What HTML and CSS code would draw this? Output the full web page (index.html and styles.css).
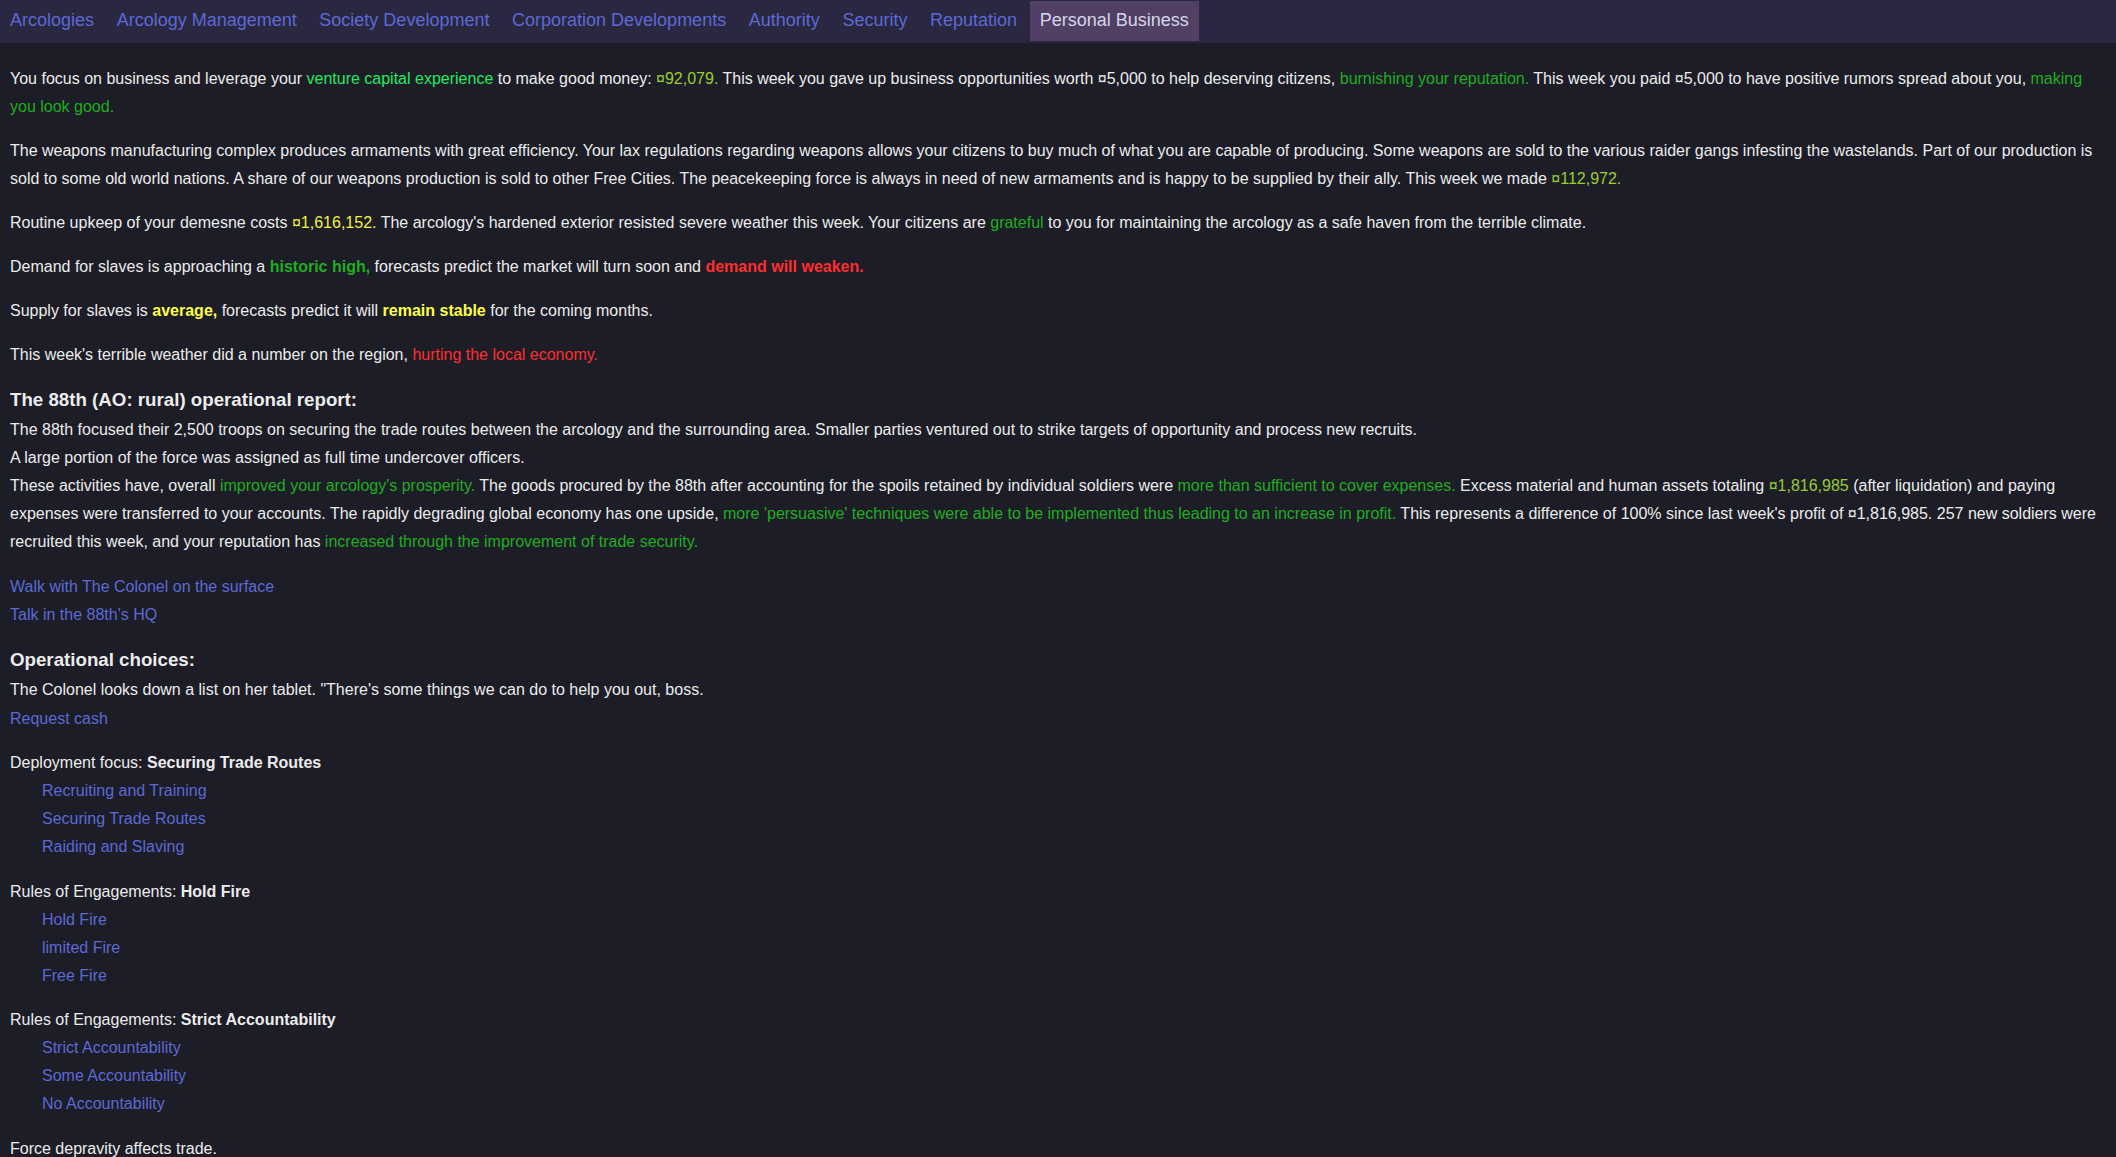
FILE: index.html
```html
<!DOCTYPE html>
<html lang="en">
<head>
<meta charset="utf-8">
<title>Personal Business</title>
<link rel="stylesheet" href="styles.css">
</head>
<body>
<nav class="tab-bar">
  <span class="tab">Arcologies</span>
  <span class="tab">Arcology Management</span>
  <span class="tab">Society Development</span>
  <span class="tab">Corporation Developments</span>
  <span class="tab">Authority</span>
  <span class="tab">Security</span>
  <span class="tab">Reputation</span>
  <span class="tab active">Personal Business</span>
</nav>
<main class="content">
  <p>You focus on business and leverage your <span class="lime">venture capital experience</span> to make good money: <span class="cash">¤92,079.</span> This week you gave up business opportunities worth ¤5,000 to help deserving citizens, <span class="green">burnishing your reputation.</span> This week you paid ¤5,000 to have positive rumors spread about you, <span class="green">making you look good.</span></p>
  <p>The weapons manufacturing complex produces armaments with great efficiency. Your lax regulations regarding weapons allows your citizens to buy much of what you are capable of producing. Some weapons are sold to the various raider gangs infesting the wastelands. Part of our production is sold to some old world nations. A share of our weapons production is sold to other Free Cities. The peacekeeping force is always in need of new armaments and is happy to be supplied by their ally. This week we made <span class="cash">¤112,972.</span></p>
  <p>Routine upkeep of your demesne costs <span class="yellow">¤1,616,152.</span> The arcology's hardened exterior resisted severe weather this week. Your citizens are <span class="green">grateful</span> to you for maintaining the arcology as a safe haven from the terrible climate.</p>
  <p>Demand for slaves is approaching a <b class="green">historic high,</b> forecasts predict the market will turn soon and <b class="red">demand will weaken.</b></p>
  <p>Supply for slaves is <b class="yellow">average,</b> forecasts predict it will <b class="yellow">remain stable</b> for the coming months.</p>
  <p>This week's terrible weather did a number on the region, <span class="red">hurting the local economy.</span></p>

  <h3 class="section-title">The 88th (AO: rural) operational report:</h3>
  <div class="report">
    <div>The 88th focused their 2,500 troops on securing the trade routes between the arcology and the surrounding area. Smaller parties ventured out to strike targets of opportunity and process new recruits.</div>
    <div>A large portion of the force was assigned as full time undercover officers.</div>
    <div>These activities have, overall <span class="green">improved your arcology's prosperity.</span> The goods procured by the 88th after accounting for the spoils retained by individual soldiers were <span class="green">more than sufficient to cover expenses.</span> Excess material and human assets totaling <span class="cash">¤1,816,985</span> (after liquidation) and paying expenses were transferred to your accounts. The rapidly degrading global economy has one upside, <span class="green">more 'persuasive' techniques were able to be implemented thus leading to an increase in profit.</span> This represents a difference of 100% since last week's profit of ¤1,816,985. 257 new soldiers were recruited this week, and your reputation has <span class="green">increased through the improvement of trade security.</span></div>
  </div>

  <div class="links">
    <a class="link">Walk with The Colonel on the surface</a>
    <a class="link">Talk in the 88th's HQ</a>
  </div>

  <h3 class="section-title">Operational choices:</h3>
  <div>The Colonel looks down a list on her tablet. "There's some things we can do to help you out, boss.</div>
  <div class="request"><a class="link">Request cash</a></div>

  <div class="choice">
    <div>Deployment focus: <b>Securing Trade Routes</b></div>
    <div class="options">
      <a class="link">Recruiting and Training</a>
      <a class="link">Securing Trade Routes</a>
      <a class="link">Raiding and Slaving</a>
    </div>
  </div>

  <div class="choice">
    <div>Rules of Engagements: <b>Hold Fire</b></div>
    <div class="options">
      <a class="link">Hold Fire</a>
      <a class="link">limited Fire</a>
      <a class="link">Free Fire</a>
    </div>
  </div>

  <div class="choice">
    <div>Rules of Engagements: <b>Strict Accountability</b></div>
    <div class="options">
      <a class="link">Strict Accountability</a>
      <a class="link">Some Accountability</a>
      <a class="link">No Accountability</a>
    </div>
  </div>

  <div class="choice">
    <div>Force depravity affects trade.</div>
  </div>
</main>
</body>
</html>
```
FILE: styles.css
```css
html {
  overflow: hidden;
  background: #1c1d26;
}

body {
  margin: 0;
  background: #1c1d26;
  color: #ececec;
  font-family: "Liberation Sans", Arial, sans-serif;
  font-size: 16px;
  line-height: 28px;
}

.tab-bar {
  display: flex;
  gap: 2.6px;
  background: #2a2740;
  padding: 1px 0 2px 0;
}

.tab {
  display: block;
  height: 40px;
  line-height: 38px;
  padding: 0 10px;
  font-size: 18px;
  color: #5c69d6;
  white-space: nowrap;
}

.tab.active {
  background: #514063;
  color: #d6d6ea;
}

.content {
  padding: 6px 10px 0 10px;
}

.content p {
  margin: 16px 0;
}

.section-title {
  font-size: 18.72px;
  font-weight: bold;
  line-height: 28px;
  margin: 17px 0 2px 0;
}

.report {
  margin-bottom: 17px;
}

.links {
  display: flex;
  flex-direction: column;
}

.link {
  color: #5c69d6;
  cursor: pointer;
}

.request {
  margin-top: 0.5px;
}

.choice {
  margin-top: 16.5px;
}

.options {
  display: flex;
  flex-direction: column;
  align-items: flex-start;
  padding-left: 32px;
}

.lime { color: #22ea60; }
.green { color: #1fae1f; }
.cash { color: #9acd32; }
.yellow { color: #f2f23c; }
.red { color: #ff2e2e; }
b.yellow { color: #ffff44; }
```
